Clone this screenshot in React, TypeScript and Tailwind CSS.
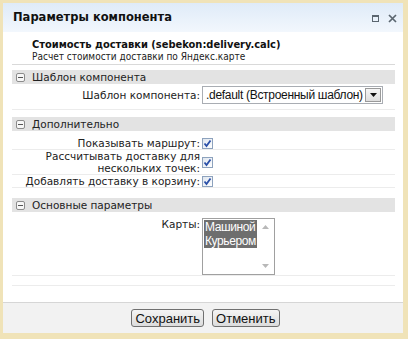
import React from "react";

const Minus = () => (
  <span className="w-[9px] h-[9px] border border-[#8c8c8c] rounded-[2px] bg-[#f7f7f7] flex items-center justify-center shrink-0">
    <span className="w-[5px] h-[1px] bg-[#555]" />
  </span>
);

const Bar = ({ title }: { title: string }) => (
  <div className="h-[14px] bg-[#e3e3e3] flex items-center pl-[4px] gap-[7px] text-[10.5px] leading-[12px] text-[#222]">
    <Minus />
    <span>{title}</span>
  </div>
);

const Check = () => (
  <span className="w-[11px] h-[11px] border border-[#8da2bd] bg-gradient-to-br from-[#dfe6ef] to-[#ffffff] flex items-center justify-center shrink-0">
    <svg width="9" height="9" viewBox="0 0 9 9">
      <path d="M1.5 4.5 L3.5 7 L7.5 1.5" fill="none" stroke="#2a4fa8" strokeWidth="1.8" />
    </svg>
  </span>
);

const CheckRow = ({ label }: { label: React.ReactNode }) => (
  <div className="flex items-center border-b border-[#ececec]">
    <div className="w-[188px] text-right text-[10.5px] leading-[12px] text-[#222]">{label}</div>
    <div className="ml-[2px]">
      <Check />
    </div>
  </div>
);

export default function App() {
  return (
    <div
      className="w-[408px] h-[339px] bg-[#f0e3b8] pt-[3px] pl-[3px] pr-[5px] pb-[6px]"
      style={{ fontFamily: '"DejaVu Sans", Verdana, sans-serif' }}
    >
      <div className="h-full flex flex-col bg-white">
        {/* header */}
        <div className="h-[29px] shrink-0 bg-gradient-to-b from-[#dfebf8] to-[#f2f7fd] flex items-center justify-between pl-[10px] pr-[6px]">
          <span className="text-[11.5px] font-bold text-[#111] leading-none">Параметры компонента</span>
          <div className="flex items-center gap-[9px] pt-[1px]">
            <span className="w-[7px] h-[7px] border-[1.5px] border-[#5b6670] border-t-[2px]" />
            <svg width="9" height="9" viewBox="0 0 9 9">
              <path d="M1 1 L8 8 M8 1 L1 8" stroke="#5b6670" strokeWidth="1.7" />
            </svg>
          </div>
        </div>

        {/* content */}
        <div className="flex-1 pl-[9px] pr-[8px]">
          <div
            className="pt-[6px] pl-[20px] border-b border-[#d9d9d9] pb-[1px]"
            style={{ fontFamily: '"DejaVu Sans Condensed", "DejaVu Sans", sans-serif' }}
          >
            <div className="text-[11px] leading-[13px] font-bold text-[#111]">Стоимость доставки (sebekon:delivery.calc)</div>
            <div className="text-[10px] leading-[12px] text-[#222]">Расчет стоимости доставки по Яндекс.карте</div>
          </div>

          <div className="mt-[5px]">
            <Bar title="Шаблон компонента" />
          </div>
          <div className="flex items-center pt-[2px] pb-[5px] border-b border-[#ececec]">
            <div className="w-[188px] text-right text-[10.5px] leading-[12px] text-[#222]">Шаблон компонента:</div>
            <div className="ml-[2px] w-[181px] h-[18px] border border-[#a9adb3] flex items-center justify-between pl-[3px] pr-[1px] overflow-hidden">
              <span
                className="text-[12px] text-[#111] leading-none whitespace-nowrap tracking-[-0.3px]"
                style={{ fontFamily: '"Liberation Sans", Arial, sans-serif' }}
              >
                .default (Встроенный шаблон)
              </span>
              <span className="w-[16px] h-[14px] shrink-0 border border-[#9a9a9a] bg-gradient-to-b from-[#f6f6f6] to-[#dedede] flex items-center justify-center">
                <svg width="7" height="4" viewBox="0 0 7 4">
                  <path d="M0 0 H7 L3.5 4 Z" fill="#111" />
                </svg>
              </span>
            </div>
          </div>

          <div className="mt-[7px]">
            <Bar title="Дополнительно" />
          </div>
          <div className="pt-[6px]">
            <CheckRow label="Показывать маршрут:" />
            <CheckRow
              label={
                <>
                  Рассчитывать доставку для
                  <br />
                  нескольких точек:
                </>
              }
            />
            <CheckRow label="Добавлять доставку в корзину:" />
          </div>

          <div className="mt-[10px]">
            <Bar title="Основные параметры" />
          </div>
          <div className="flex items-start pt-[6px] border-b border-[#ececec]">
            <div className="w-[188px] text-right text-[10.5px] leading-[12px] text-[#222]">Карты:</div>
            <div className="ml-[2px] w-[73px] h-[57px] border border-[#a0a0a0] flex p-[1px]">
              <div
                className="flex-1 flex flex-col text-[12px] leading-[14px] text-white"
                style={{ fontFamily: '"Liberation Sans", Arial, sans-serif' }}
              >
                <span className="bg-[#6e6e6e] pl-[1px] tracking-[-0.4px]">Машиной</span>
                <span className="bg-[#6e6e6e] pl-[1px] tracking-[-0.4px]">Курьером</span>
              </div>
              <div className="w-[16px] flex flex-col items-center justify-between py-[5px]">
                <svg width="7" height="4" viewBox="0 0 7 4">
                  <path d="M0 4 H7 L3.5 0 Z" fill="#b8b8b8" />
                </svg>
                <svg width="7" height="4" viewBox="0 0 7 4">
                  <path d="M0 0 H7 L3.5 4 Z" fill="#b8b8b8" />
                </svg>
              </div>
            </div>
          </div>
          <div className="h-[10px] border-b border-[#ececec]" />
        </div>

        {/* footer */}
        <div
          className="h-[31px] shrink-0 bg-[#f2f2f2] border-t border-[#d6d6d6] flex justify-center items-start pt-[6px] pl-[5px] gap-[8px]"
          style={{ fontFamily: '"Liberation Sans", Arial, sans-serif' }}
        >
          <button className="h-[18px] px-[3px] text-[13px] leading-none text-[#111] border border-[#707070] rounded-[3px] bg-gradient-to-b from-[#f4f4f4] to-[#dcdcdc]">
            Сохранить
          </button>
          <button className="h-[18px] px-[3px] text-[13px] leading-none text-[#111] border border-[#707070] rounded-[3px] bg-gradient-to-b from-[#f4f4f4] to-[#dcdcdc]">
            Отменить
          </button>
        </div>
      </div>
    </div>
  );
}
